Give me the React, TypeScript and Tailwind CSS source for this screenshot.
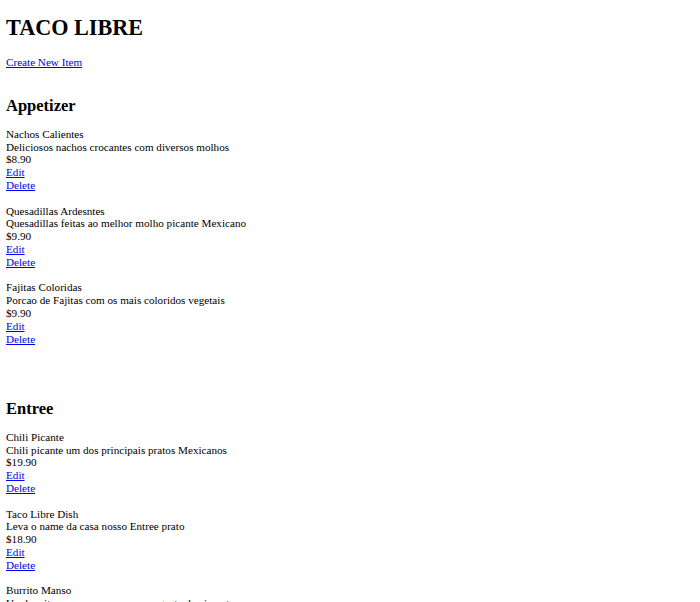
import React from "react";

type IItem = {
  name: string;
  description: string;
  price: string;
};

type ISection = {
  title: string;
  items: IItem[];
};

const sections: ISection[] = [
  {
    title: "Appetizer",
    items: [
      { name: "Nachos Calientes", description: "Deliciosos nachos crocantes com diversos molhos", price: "$8.90" },
      { name: "Quesadillas Ardesntes", description: "Quesadillas feitas ao melhor molho picante Mexicano", price: "$9.90" },
      { name: "Fajitas Coloridas", description: "Porcao de Fajitas com os mais coloridos vegetais", price: "$9.90" },
    ],
  },
  {
    title: "Entree",
    items: [
      { name: "Chili Picante", description: "Chili picante um dos principais pratos Mexicanos", price: "$19.90" },
      { name: "Taco Libre Dish", description: "Leva o name da casa nosso Entree prato", price: "$18.90" },
      { name: "Burrito Manso", description: "Um burrito manso para quem nao gosta de pimenta", price: "$12.90" },
    ],
  },
];

const MenuItem: React.FunctionComponent<{ item: IItem }> = ({ item }) => (
  <div className="flex flex-col">
    <span>{item.name}</span>
    <span>{item.description}</span>
    <span>{item.price}</span>
    <a href="#" className="self-start text-[#0000ee] underline">
      Edit
    </a>
    <a href="#" className="self-start text-[#0000ee] underline">
      Delete
    </a>
  </div>
);

export default function App() {
  return (
    <div className="h-[602px] overflow-hidden bg-white px-[6px] text-[11.15px] leading-[12.8px] text-black [font-family:'Liberation_Serif',serif]">
      <h1 className="pt-[16px] text-[22.2px] font-bold leading-[24.6px]">TACO LIBRE</h1>
      <a href="#" className="mt-[15px] inline-block text-[#0000ee] underline">
        Create New Item
      </a>
      {sections.map((section, index) => (
        <div key={"section_" + index} className={index === 0 ? "mt-[29px]" : "mt-[55px]"}>
          <h2 className="text-[16.5px] font-bold leading-[18.4px]">{section.title}</h2>
          <div className="mt-[12px] flex flex-col gap-[12.8px]">
            {section.items.map((item, itemIndex) => (
              <MenuItem key={"item_" + itemIndex} item={item} />
            ))}
          </div>
        </div>
      ))}
    </div>
  );
}
